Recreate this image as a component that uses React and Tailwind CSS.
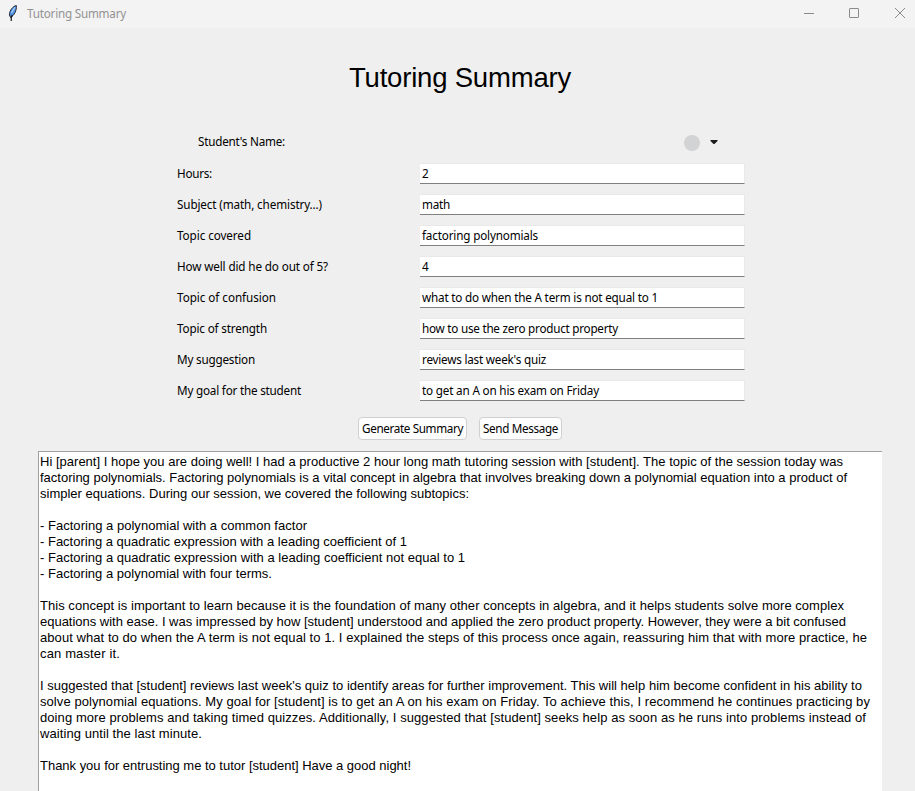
import { useLayoutEffect, useRef } from "react";

// Spreads a single line of text over a fixed advance width.
function Line({ text, width }) {
  const ref = useRef(null);
  useLayoutEffect(() => {
    const el = ref.current;
    el.style.letterSpacing = "0px";
    const natural = el.getBoundingClientRect().width;
    el.style.letterSpacing = `${(width - natural) / text.length}px`;
  }, [text, width]);
  return (
    <span ref={ref} className="inline-block whitespace-pre">
      {text}
    </span>
  );
}

const fields = [
  ["Hours:", 35, "2", 7],
  ["Subject (math, chemistry...)", 145, "math", 28],
  ["Topic covered", 74, "factoring polynomials", 116],
  ["How well did he do out of 5?", 151, "4", 7],
  ["Topic of confusion", 99, "what to do when the A term is not equal to 1", 236],
  ["Topic of strength", 90, "how to use the zero product property", 196],
  ["My suggestion", 78, "reviews last week's quiz", 124],
  ["My goal for the student", 124, "to get an A on his exam on Friday", 177],
];

const message = [
  ["Hi [parent] I hope you are doing well! I had a productive 2 hour long math tutoring session with [student]. The topic of the session today was", 803],
  ["factoring polynomials. Factoring polynomials is a vital concept in algebra that involves breaking down a polynomial equation into a product of", 807],
  ["simpler equations. During our session, we covered the following subtopics:", 429],
  ["", 0],
  ["- Factoring a polynomial with a common factor", 267],
  ["- Factoring a quadratic expression with a leading coefficient of 1", 367],
  ["- Factoring a quadratic expression with a leading coefficient not equal to 1", 425],
  ["- Factoring a polynomial with four terms.", 232],
  ["", 0],
  ["This concept is important to learn because it is the foundation of many other concepts in algebra, and it helps students solve more complex", 804],
  ["equations with ease. I was impressed by how [student] understood and applied the zero product property. However, they were a bit confused", 806],
  ["about what to do when the A term is not equal to 1. I explained the steps of this process once again, reassuring him that with more practice, he", 827],
  ["can master it.", 80],
  ["", 0],
  ["I suggested that [student] reviews last week's quiz to identify areas for further improvement. This will help him become confident in his ability to", 822],
  ["solve polynomial equations. My goal for [student] is to get an A on his exam on Friday. To achieve this, I recommend he continues practicing by", 830],
  ["doing more problems and taking timed quizzes. Additionally, I suggested that [student] seeks help as soon as he runs into problems instead of", 826],
  ["waiting until the last minute.", 162],
  ["", 0],
  ["Thank you for entrusting me to tutor [student] Have a good night!", 371],
];

function Feather() {
  return (
    <svg width="10" height="17" viewBox="0 0 10 17" className="mb-1 ml-2 shrink-0">
      <path d="M8.300 1.500C5.500 2 1.400 6 1.400 11L2.600 13.500C5.900 11.700 8.900 6.700 8.300 1.500Z" fill="#4a90e2" stroke="#252b35" strokeWidth="1" />
      <path d="M7 3.300 3.400 9" stroke="#a9d0fa" strokeWidth="1.400" />
      <path d="M4.300 11 3.300 13 3.200 17" fill="none" stroke="#151515" strokeWidth="1.200" />
    </svg>
  );
}

export default function App() {
  return (
    <div className="flex h-[791px] w-[915px] flex-col overflow-hidden bg-[#efefef] font-['Noto_Sans','Open_Sans',sans-serif] text-[11.7px] text-black">
      <header className="flex h-7 shrink-0 items-center bg-[#f3f3f3] text-[#929292]">
        <Feather />
        <div className="ml-[9px] pb-0.5 leading-4">
          <Line text="Tutoring Summary" width={99} />
        </div>
        <svg className="ml-auto" width="111" height="28" viewBox="0 0 111 28" fill="none" stroke="#8a8a8a">
          <path d="M0 13.500h10" />
          <rect x="45.500" y="8.500" width="9" height="9" rx="0.500" />
          <path d="m91 8 10 10m0-10L91 18" />
        </svg>
      </header>

      <h1 className="mt-[34px] ml-[349px] h-8 font-['Liberation_Sans',Arial,sans-serif] text-[27.500px] leading-8">
        <Line text="Tutoring Summary" width={222} />
      </h1>

      <div className="mt-[38px] ml-[198px] flex h-5 items-center">
        <div className="w-[486px]">
          <Line text="Student's Name:" width={87} />
        </div>
        <div className="relative top-px size-4 rounded-full bg-[#d2d3d5]" />
        <svg className="ml-2.5" width="8" height="4" viewBox="0 0 8 4">
          <path d="M0.500 0h7v1L4.500 4h-1L0.500 1Z" fill="#1c1c1c" />
        </svg>
      </div>

      <form className="mt-[11px] ml-[177px] flex flex-col gap-2.5">
        {fields.map(([label, labelWidth, value, valueWidth]) => (
          <div key={label} className="flex h-[21px] items-start">
            <label className="w-[243px] pt-px leading-[19px]">
              <Line text={label} width={labelWidth} />
            </label>
            <div className="h-[21px] w-[325px] border-t border-r border-b border-[#e9e9e9] border-b-[#808080] bg-white pl-0.5 leading-[19px]">
              <Line text={value} width={valueWidth} />
            </div>
          </div>
        ))}
      </form>

      <div className="mt-4 ml-[358px] flex gap-3">
        <button className="h-[23px] w-[109px] rounded-[4px] border border-[#d0d0d0] bg-[#fdfdfd] leading-[21px]">
          <Line text="Generate Summary" width={101} />
        </button>
        <button className="h-[23px] w-[83px] rounded-[4px] border border-[#d0d0d0] bg-[#fdfdfd] leading-[21px]">
          <Line text="Send Message" width={75} />
        </button>
      </div>

      <main className="mt-[11px] ml-[38px] w-[844px] flex-1 border-t border-l border-[#a0a0a0] bg-white pt-0.5 pl-px font-['Liberation_Sans',Arial,sans-serif] text-[13px] leading-4">
        {message.map(([text, width], i) => (
          <div key={i} className="h-4">
            {text && <Line text={text} width={width} />}
          </div>
        ))}
      </main>
    </div>
  );
}
